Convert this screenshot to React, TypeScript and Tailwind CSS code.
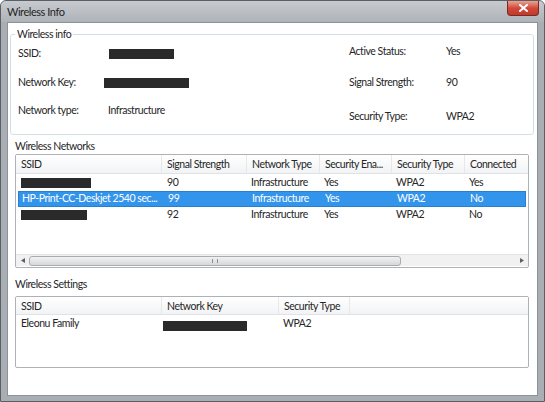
import React from 'react';

const Redacted: React.FC<{ w: number; className?: string }> = ({ w, className }) => (
    <span className={`inline-block h-[10px] bg-[#2a2a2a] ${className ?? ''}`} style={{ width: w }} />
);

const networkCols = [
    { title: 'SSID', w: 146 },
    { title: 'Signal Strength', w: 85 },
    { title: 'Network Type', w: 73 },
    { title: 'Security Ena...', w: 72 },
    { title: 'Security Type', w: 73 },
    { title: 'Connected', w: 72 },
];

const networks = [
    { ssid: null, redact: 70, signal: '90', type: 'Infrastructure', sec: 'Yes', secType: 'WPA2', connected: 'Yes' },
    { ssid: 'HP-Print-CC-Deskjet 2540 sec...', redact: 0, signal: '99', type: 'Infrastructure', sec: 'Yes', secType: 'WPA2', connected: 'No', selected: true },
    { ssid: null, redact: 66, signal: '92', type: 'Infrastructure', sec: 'Yes', secType: 'WPA2', connected: 'No' },
];

const settingsCols = [
    { title: 'SSID', w: 146 },
    { title: 'Network Key', w: 117 },
    { title: 'Security Type', w: 71 },
];

const HeaderCell: React.FC<{ w: number; children: React.ReactNode }> = ({ w, children }) => (
    <div className="h-full shrink-0 flex items-center pl-[5px] pt-[2px] border-r border-[#e6e9ec] whitespace-nowrap overflow-hidden" style={{ width: w }}>
        {children}
    </div>
);

const App: React.FC = () => {
    return (
        <div className="w-[545px] h-[402px] font-['Lato',sans-serif] text-[10.5px] tracking-[-0.45px] whitespace-nowrap text-[#262626] bg-[#a9aeb4] border border-[#5b5f64] rounded-t-[6px] flex flex-col overflow-hidden">
            {/* title bar */}
            <div className="h-[21px] shrink-0 flex items-start justify-between bg-gradient-to-b from-[#c7cbd0] to-[#aeb3b9]">
                <span className="pl-[6px] pt-[4px] leading-[13px] text-[11px] text-[#1e1e1e]">Wireless Info</span>
                <div className="mr-[5px] w-[32px] h-[15px] rounded-b-[4px] border border-t-0 border-[#7a2a20] bg-gradient-to-b from-[#e8a293] via-[#d2493a] to-[#c0392b] flex items-center justify-center">
                    <svg width="9" height="8" viewBox="0 0 9 8">
                        <path d="M1 1 L8 7 M8 1 L1 7" stroke="#ffffff" strokeWidth="2" strokeLinecap="square" />
                    </svg>
                </div>
            </div>

            {/* client area */}
            <div className="ml-[6px] mr-[6px] h-[374px] bg-white border border-[#8d9298] flex flex-col">
                {/* Wireless info group */}
                <fieldset className="mt-[4px] ml-[2px] mr-[3px] h-[108px] border border-[#d3dee4] rounded-[3px] px-0">
                    <legend className="ml-[4px] px-[2px] leading-[14px]">Wireless info</legend>
                    <div className="flex">
                        <div className="w-[338px] flex flex-col pl-[7px]">
                            <div className="flex items-center h-[14px] mt-[6px]">
                                <span className="w-[90px]">SSID:</span>
                                <Redacted w={65} className="ml-[1px]" />
                            </div>
                            <div className="flex items-center h-[14px] mt-[15px]">
                                <span className="w-[86px]">Network Key:</span>
                                <Redacted w={85} />
                            </div>
                            <div className="flex items-center h-[14px] mt-[14px]">
                                <span className="w-[90px]">Network type:</span>
                                <span>Infrastructure</span>
                            </div>
                        </div>
                        <div className="flex flex-col">
                            <div className="flex items-center h-[14px] mt-[4px]">
                                <span className="w-[97px]">Active Status:</span>
                                <span>Yes</span>
                            </div>
                            <div className="flex items-center h-[14px] mt-[17px]">
                                <span className="w-[97px]">Signal Strength:</span>
                                <span>90</span>
                            </div>
                            <div className="flex items-center h-[14px] mt-[20px]">
                                <span className="w-[97px]">Security Type:</span>
                                <span>WPA2</span>
                            </div>
                        </div>
                    </div>
                </fieldset>

                {/* Wireless Networks */}
                <div className="ml-[7px] mt-[4px] h-[14px] leading-[14px]">Wireless Networks</div>
                <div className="ml-[7px] mr-[8px] mt-[1px] h-[114px] border border-[#adb2b8] rounded-[2px] flex flex-col overflow-hidden">
                    <div className="h-[19px] shrink-0 flex bg-gradient-to-b from-white to-[#f2f3f5] border-b border-[#dfe2e6]">
                        {networkCols.map((c) => (
                            <HeaderCell key={c.title} w={c.w}>{c.title}</HeaderCell>
                        ))}
                    </div>
                    <div className="flex-1 flex flex-col pt-[1px]">
                        {networks.map((n, i) => (
                            <div
                                key={i}
                                className={`h-[16px] flex items-center mx-[2px] ${n.selected ? 'bg-[#3394ec] text-white border border-[#2a7fd0]' : ''}`}
                            >
                                <div className="shrink-0 pl-[3px] overflow-hidden" style={{ width: 144 }}>
                                    {n.ssid ?? <Redacted w={n.redact} className="align-middle" />}
                                </div>
                                <div className="shrink-0 pl-[5px]" style={{ width: 85 }}>{n.signal}</div>
                                <div className="shrink-0 pl-[4px]" style={{ width: 73 }}>{n.type}</div>
                                <div className="shrink-0 pl-[4px]" style={{ width: 72 }}>{n.sec}</div>
                                <div className="shrink-0 pl-[4px]" style={{ width: 73 }}>{n.secType}</div>
                                <div className="shrink-0 pl-[4px]" style={{ width: 60 }}>{n.connected}</div>
                            </div>
                        ))}
                    </div>
                    {/* horizontal scrollbar */}
                    <div className="h-[12px] shrink-0 flex items-center bg-[#f1f1f1] border-t border-[#e4e4e4] mb-[1px]">
                        <div className="w-[13px] h-full flex items-center justify-center">
                            <svg width="4" height="5" viewBox="0 0 4 5"><path d="M4 0 L0 2.5 L4 5 Z" fill="#5f5f5f" /></svg>
                        </div>
                        <div className="w-[372px] h-[10px] rounded-[3px] border border-[#a9acaf] bg-gradient-to-b from-[#f2f2f2] to-[#d6d7d9] flex items-center justify-center">
                            <div className="w-[6px] h-[4px] border-x border-[#8c8f92]" />
                        </div>
                        <div className="flex-1" />
                        <div className="w-[13px] h-full flex items-center justify-center">
                            <svg width="4" height="5" viewBox="0 0 4 5"><path d="M0 0 L4 2.5 L0 5 Z" fill="#5f5f5f" /></svg>
                        </div>
                    </div>
                </div>

                {/* Wireless Settings */}
                <div className="ml-[7px] mt-[9px] h-[14px] leading-[14px]">Wireless Settings</div>
                <div className="ml-[7px] mr-[8px] mt-[5px] h-[72px] border border-[#adb2b8] rounded-[2px] flex flex-col overflow-hidden">
                    <div className="h-[18px] shrink-0 flex bg-gradient-to-b from-white to-[#f2f3f5] border-b border-[#dfe2e6]">
                        {settingsCols.map((c) => (
                            <HeaderCell key={c.title} w={c.w}>{c.title}</HeaderCell>
                        ))}
                    </div>
                    <div className="h-[18px] flex items-center">
                        <div className="shrink-0 pl-[5px]" style={{ width: 146 }}>Eleonu Family</div>
                        <div className="shrink-0 pt-[4px]" style={{ width: 117 }}>
                            <Redacted w={84} className="ml-[1px] align-middle" />
                        </div>
                        <div className="shrink-0 pl-[4px]">WPA2</div>
                    </div>
                </div>
            </div>
        </div>
    );
};

export default App;
